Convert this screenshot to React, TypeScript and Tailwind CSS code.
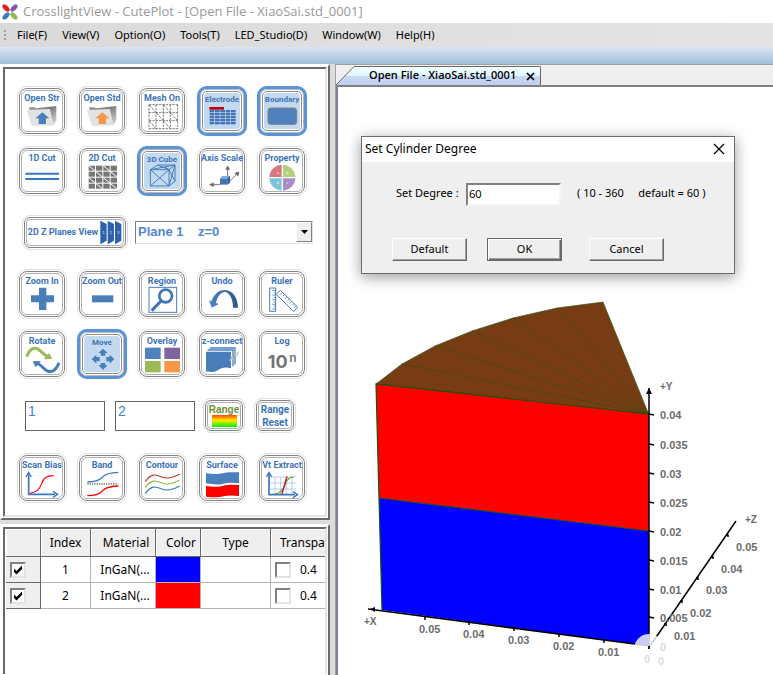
import type { ReactNode } from "react";

const UI = "font-['Noto_Sans','Open_Sans',sans-serif]";
const NARROW = "font-['Roboto',sans-serif]";
const BLUE = "#4a7ebb";

/* ---------- tool buttons ---------- */

function Tile({ label, active, children }: { label: string; active?: boolean; children: ReactNode }) {
  if (active) {
    return (
      <button className="relative h-[50px] w-[50px] rounded-[10px] border-[3px] border-[#5b93d6] bg-white shadow-[0_0_1px_0_#a9c8ec]">
        <span className="absolute inset-0 rounded-[7px] border border-[#b9b9b9]" />
        <span className="absolute inset-[2px] rounded-[5px] border border-[#8c8c8c] bg-white p-px">
          <span className="block h-full rounded-[3px] bg-[#c3d9f0]" />
        </span>
        <span className={`${NARROW} absolute inset-x-0 top-[6px] flex justify-center text-[8px] leading-[10px] font-bold text-[#3f74b5] whitespace-nowrap`}>
          {label}
        </span>
        <Icon className="absolute top-[15px] left-[5px] h-7 w-9 overflow-visible">{children}</Icon>
      </button>
    );
  }
  return (
    <button className="relative h-[50px] w-[50px] rounded-[10px] border border-[#dedede] bg-white p-px">
      <span className="block h-full rounded-[8px] border border-[#858585] p-px">
        <span className="block h-full rounded-[6px] border border-[#b0b0b0]" />
      </span>
      <span className={`${NARROW} absolute inset-x-0 top-[5px] flex justify-center text-[9px] leading-[12px] font-bold text-[#3c73b8] whitespace-nowrap`}>
        {label}
      </span>
      <Icon className="absolute top-[17px] left-[7px] h-7 w-9 overflow-visible">{children}</Icon>
    </button>
  );
}

function Icon({ className, children }: { className: string; children: ReactNode }) {
  return (
    <svg viewBox="0 0 108 84" className={className} fill="none" aria-hidden="true">
      {children}
    </svg>
  );
}

function Frame({ className, children }: { className: string; children: ReactNode }) {
  return (
    <button className={`${className} rounded-[8px] border border-[#dedede] bg-white p-px`}>
      <span className="block h-full rounded-[6px] border border-[#858585] p-px">
        <span className="flex h-full items-center justify-center rounded-[4px] border border-[#b0b0b0]">{children}</span>
      </span>
    </button>
  );
}

/* ---------- icon drawings, on a 108 x 84 grid ---------- */

function Folder({ arrow, id }: { arrow: string; id: string }) {
  return (
    <>
      <defs>
        <linearGradient id={id} x1="0" y1="0" x2="1" y2="1">
          <stop offset="0" stopColor="#9a9a9a" />
          <stop offset="0.45" stopColor="#7d7d7d" />
          <stop offset="1" stopColor="#e0e0e0" />
        </linearGradient>
      </defs>
      <path d="M12 10 H28 L33 13 L94 6 V50 L84 64 H22Z" fill={`url(#${id})`} />
      <path d="M5 18 L75 15 L85 64 H20Z" fill="#e2e2e2" />
      <path d="M52 25 L73 43 H63 V60 H41 V43 H31Z" fill={arrow} />
    </>
  );
}

function MeshIcon() {
  return (
    <g stroke="#666" strokeWidth="2.5">
      <g strokeDasharray="7 3">
        {[12, 33, 55, 76, 98].map((x) => <path key={x} d={`M${x} 2V74`} />)}
        {[2, 26, 50, 74].map((y) => <path key={y} d={`M12 ${y}H98`} />)}
      </g>
      <path d="M12 2L33 26M33 26L55 50M55 2L76 26M12 50L33 74M55 50L76 74M76 26L98 50" strokeDasharray="9 3" />
    </g>
  );
}

function ElectrodeIcon() {
  const rows = [18, 27, 36, 45, 54];
  const cols = [14, 30, 46, 62, 78];
  return (
    <>
      {rows.map((y) => cols.map((x) => <rect key={`${x}-${y}`} x={x} y={y} width="14" height="7" fill="#3f74b8" />))}
      <rect x="13" y="9" width="44" height="8" fill="#c00000" />
    </>
  );
}

function CutGridIcon() {
  const cols = [11, 33, 55, 77];
  const rows = [5, 23, 41, 59];
  return (
    <>
      {rows.map((y) => cols.map((x) => <rect key={`${x}-${y}`} x={x} y={y} width="19" height="15" fill="#777" />))}
      <path d="M11 5L95 74M55 5L95 38M11 41L52 74" stroke="#fff" strokeWidth="3" />
    </>
  );
}

function CubeIcon() {
  return (
    <path d="M16 17H72V66H16ZM16 17L38 3H90L72 17M90 3V52L72 66M16 17L72 66M72 17L16 66M38 3L72 17M16 17L90 3M72 17L90 52M90 3L72 66M60 10L72 17" stroke={BLUE} strokeWidth="3" />
  );
}

function AxisIcon() {
  return (
    <>
      <path d="M68 42V8M45 62H18M70 55L100 26" stroke="#777" strokeWidth="3" />
      <path d="M62 17L68 6L74 17M26 56L14 62L26 68M89 28L102 24L99 37" fill="#666" stroke="#666" strokeWidth="2" />
      <path d="M45 43H67V62H45Z" fill="#3f74b8" />
      <path d="M45 43L52 36H75L67 43Z" fill="#7ea6d6" />
      <path d="M67 43L75 36V56L67 62Z" fill="#2c5a96" />
    </>
  );
}

function PropertyIcon() {
  return (
    <>
      <path d="M52 41V2A39 39 0 0 0 13 41Z" fill="#d3797f" />
      <path d="M52 41V2A39 39 0 0 1 91 41Z" fill="#b4d07e" />
      <path d="M52 41V80A39 39 0 0 1 13 41Z" fill="#7cc3dc" />
      <path d="M52 41V80A39 39 0 0 0 91 41Z" fill="#a78cc6" />
      <path d="M52 0V82M11 41H93" stroke="#fff" strokeWidth="4" />
      <g fill="#fff" fontSize="12" fontFamily="Liberation Sans">
        <text x="35" y="31">a</text>
        <text x="64" y="31">b</text>
        <text x="35" y="59">d</text>
        <text x="64" y="59">c</text>
      </g>
    </>
  );
}

function UndoIcon() {
  return (
    <>
      <defs>
        <linearGradient id="undo" x1="0" x2="1">
          <stop offset="0" stopColor="#4a85cc" />
          <stop offset="1" stopColor="#2f5483" />
        </linearGradient>
      </defs>
      <path d="M12 40L19 43C28 20 42 9 58 9C80 9 98 28 99 62H84C84 38 76 18 60 14C46 16 36 30 33 48L41 51L20 62Z" fill="url(#undo)" />
    </>
  );
}

function RulerIcon() {
  return (
    <g stroke={BLUE} strokeWidth="3">
      <path d="M14 3H32V73H14Z" />
      <path d="M22 10H32M26 17H32M22 24H32M26 31H32M22 38H32M26 45H32M22 52H32M26 59H32M22 66H32" strokeWidth="2.5" />
      <path d="M34 22L46 10L98 60L86 74Z" />
      <path d="M52 16L45 23M59 22L54 27M66 29L59 36M73 36L68 41M80 43L73 50M87 50L82 55M93 56L86 63" strokeWidth="2.5" />
    </g>
  );
}

function RotateIcon() {
  return (
    <>
      <path d="M5 29C14 6 26 -1 40 7C52 14 56 25 72 30" stroke="#9bbb59" strokeWidth="9" />
      <path d="M82 36L56 37L72 18Z" fill="#9bbb59" />
      <path d="M102 47C94 68 82 78 67 72C54 66 52 54 36 49" stroke={BLUE} strokeWidth="9" />
      <path d="M23 43L48 42L32 61Z" fill={BLUE} />
    </>
  );
}

function MoveIcon() {
  return (
    <path d="M54 5L68 18H61V26H47V18H40ZM54 68L68 55H61V48H47V55H40ZM20 36L34 23V30H44V43H34V50ZM88 36L74 23V30H64V43H74V50Z" fill={BLUE} />
  );
}

function SheetsIcon() {
  return (
    <>
      <path d="M14 3H90V52M8 9H84V58" stroke={BLUE} strokeWidth="4" />
      <path d="M3 14H78V64C60 58 46 64 34 72C22 78 10 72 3 74Z" fill={BLUE} />
      <path d="M74 41L84 31M88 27L101 15M78 28L86 38M88 17L98 26" stroke="#c4c4c4" strokeWidth="4" />
    </>
  );
}

/* ---------- left tool panel ---------- */

const RANGE_INPUT =
  "h-[30px] w-20 border border-[#646464] pb-[10px] pl-[2px] font-['Liberation_Sans',sans-serif] text-[14px] text-[#4a86d0] outline-none";

function ToolPanel() {
  return (
    <section className="border-2 border-t-white border-l-white border-r-[#696969] border-b-[#696969] bg-white p-px">
      <div className="border-2 border-t-[#696969] border-l-[#696969] border-r-[#e3e3e3] border-b-[#e3e3e3] pt-[17px] pb-3 pl-3">
        <div className="grid grid-cols-[repeat(5,50px)] gap-[10px]">
          <Tile label="Open Str"><Folder id="str" arrow={BLUE} /></Tile>
          <Tile label="Open Std"><Folder id="std" arrow="#f79646" /></Tile>
          <Tile label="Mesh On"><MeshIcon /></Tile>
          <Tile label="Electrode" active><ElectrodeIcon /></Tile>
          <Tile label="Boundary" active>
            <rect x="9" y="12" width="86" height="49" rx="8" fill="#4f81bd" stroke="#808080" strokeWidth="3" />
          </Tile>
          <Tile label="1D Cut"><path d="M1 29H102M1 45H102" stroke="#3a76c0" strokeWidth="6" /></Tile>
          <Tile label="2D Cut"><CutGridIcon /></Tile>
          <Tile label="3D Cube" active><CubeIcon /></Tile>
          <Tile label="Axis Scale"><AxisIcon /></Tile>
          <Tile label="Property"><PropertyIcon /></Tile>
        </div>

        <div className="mt-[19px] ml-[5px] flex items-start">
          <Frame className="h-[35px] w-[106px]">
            <span className={`${NARROW} text-[9px] font-bold text-[#3c73b8] whitespace-nowrap`}>2D Z Planes View</span>
            <svg viewBox="0 0 66 75" className="ml-[2px] h-[25px] w-[22px] shrink-0" aria-hidden="true">
              {[0, 22, 44].map((x, i) => (
                <g key={x}>
                  <path d={`M${x + 1} 2L${x + 20} 12V62L${x + 1} 73Z`} fill="#2b62ab" />
                  <text x={x + 7} y="42" fontSize="13" fill="#dce8f7" fontFamily="Liberation Sans">{i + 1}</text>
                </g>
              ))}
            </svg>
          </Frame>
          <div className="relative mt-[6px] ml-[7px] h-[23px] w-[178px]">
            <select
              aria-label="Plane"
              className="block h-full w-full appearance-none border border-t-[#808080] border-l-[#808080] border-r-[#e3e3e3] border-b-[#e3e3e3] bg-white pb-[2px] pl-[2px] font-['Liberation_Sans',sans-serif] text-[13px] font-bold text-[#5088cf] outline-none"
            >
              <option>{"Plane 1\u00a0\u00a0\u00a0\u00a0z=0"}</option>
            </select>
            <span className="pointer-events-none absolute top-px right-px flex h-5 w-4 items-center justify-center border border-t-white border-l-white border-r-[#808080] border-b-[#808080] bg-[#efefef]">
              <svg viewBox="0 0 7 4" className="h-1 w-[7px]" aria-hidden="true"><path d="M0 0H7L3.5 4Z" fill="#000" /></svg>
            </span>
          </div>
        </div>

        <div className="mt-[19px] grid grid-cols-[repeat(5,50px)] gap-[10px]">
          <Tile label="Zoom In"><path d="M42 2H64V25H87V46H64V69H42V46H18V25H42Z" fill={BLUE} /></Tile>
          <Tile label="Zoom Out"><rect x="21" y="25" width="64" height="21" fill={BLUE} /></Tile>
          <Tile label="Region">
            <rect x="12" y="1" width="83" height="75" stroke={BLUE} strokeWidth="3" />
            <circle cx="62" cy="27" r="19" stroke="#3f74b8" strokeWidth="8" />
            <path d="M48 42L20 71" stroke="#3f74b8" strokeWidth="9" />
          </Tile>
          <Tile label="Undo"><UndoIcon /></Tile>
          <Tile label="Ruler"><RulerIcon /></Tile>
          <Tile label="Rotate"><RotateIcon /></Tile>
          <Tile label="Move" active><MoveIcon /></Tile>
          <Tile label="Overlay">
            <rect x="0" y="2" width="47" height="34" fill="#4f81bd" />
            <rect x="58" y="2" width="47" height="34" fill="#8064a2" />
            <rect x="0" y="42" width="47" height="34" fill="#9bbb59" />
            <rect x="58" y="42" width="47" height="34" fill="#f79646" />
          </Tile>
          <Tile label="z-connect"><SheetsIcon /></Tile>
          <Tile label="Log">
            <text x="8" y="62" fontSize="54" fontWeight="700" fill="#757575" fontFamily="Inter">10</text>
            <text x="73" y="44" fontSize="36" fontWeight="600" fill="#757575" fontFamily="Inter">n</text>
          </Tile>
        </div>

        <div className="mt-[19px] ml-2 flex items-center">
          <input aria-label="Range from" defaultValue="1" className={`${RANGE_INPUT} mr-[10px]`} />
          <input aria-label="Range to" defaultValue="2" className={`${RANGE_INPUT} mr-2`} />
          <Frame className="mr-[9px] h-[35px] w-[42px]">
            <span className="flex flex-col items-center">
              <span className="font-['Liberation_Sans',sans-serif] text-[10px] leading-[11px] font-bold text-[#6a8f35]">Range</span>
              <span className="h-3 w-[25px] bg-[linear-gradient(#ff4a00,#ffe600_45%,#00f000)]" />
            </span>
          </Frame>
          <Frame className="h-[35px] w-[42px]">
            <span className={`${NARROW} text-center text-[10px] leading-[13px] font-bold text-[#3c73b8]`}>Range<br />Reset</span>
          </Frame>
        </div>

        <div className="mt-5 grid grid-cols-[repeat(5,50px)] gap-[10px]">
          <Tile label="Scan Bias">
            <path d="M11 72V8M9 70H90" stroke="#3a76c0" strokeWidth="5" />
            <path d="M3 18L11 4L19 18M84 61L98 70L84 79" stroke="#3a76c0" strokeWidth="4" />
            <path d="M15 67C38 62 44 54 50 38C55 20 65 15 86 14" stroke="#f00" strokeWidth="3.5" />
          </Tile>
          <Tile label="Band">
            <path d="M7 33C38 33 48 25 54 17C62 8 80 5 100 4" stroke="#3a76c0" strokeWidth="4" />
            <path d="M7 39H100" stroke="#777" strokeWidth="4" strokeDasharray="4 3" />
            <path d="M7 74C38 74 48 66 54 58C62 49 80 46 100 45" stroke="#f00" strokeWidth="4" />
          </Tile>
          <Tile label="Contour">
            <path d="M1 32C18 6 32 10 50 18C68 26 84 20 104 9" stroke="#c0392b" strokeWidth="3.5" />
            <path d="M1 50C18 24 32 28 50 36C68 44 84 38 104 27" stroke="#8db53f" strokeWidth="3.5" />
            <path d="M1 68C18 42 32 46 50 54C68 62 84 56 104 45" stroke="#3a76c0" strokeWidth="3.5" />
          </Tile>
          <Tile label="Surface">
            <path d="M3 7C28 10 40 10 55 6C72 2 86 4 102 4V37C86 36 72 34 55 38C40 42 28 41 3 37Z" fill="#4a80be" />
            <path d="M3 45C28 48 40 48 55 44C72 40 86 42 102 42V75C86 74 72 72 55 76C40 80 28 79 3 77Z" fill="#f00" />
          </Tile>
          <Tile label="Vt Extract">
            <path d="M30 18V70M47 18V70M64 18V70M81 18V70M12 18H95M12 36H95M12 54H95" stroke="#a9c4e4" strokeWidth="2.5" />
            <path d="M14 71C40 70 52 62 60 42C66 24 72 20 86 18" stroke="#76a02f" strokeWidth="3.5" />
            <path d="M50 72L66 16" stroke="#c0282d" strokeWidth="4.5" />
            <path d="M12 73V8M10 71H90" stroke="#3a76c0" strokeWidth="5" />
            <path d="M4 18L12 4L20 18M84 62L98 71L84 80" stroke="#3a76c0" strokeWidth="4" />
          </Tile>
        </div>
      </div>
    </section>
  );
}

/* ---------- layer table ---------- */

function Check({ label, checked }: { label: string; checked?: boolean }) {
  return (
    <span className="relative block h-4 w-4">
      <input
        type="checkbox"
        aria-label={label}
        defaultChecked={checked}
        className="peer block h-4 w-4 appearance-none border-2 border-t-[#808080] border-l-[#808080] border-r-[#e3e3e3] border-b-[#e3e3e3] bg-white"
      />
      <svg viewBox="0 0 10 10" className="pointer-events-none absolute top-[3px] left-[3px] hidden h-[10px] w-[10px] peer-checked:block" aria-hidden="true">
        <path d="M1 3.5V7L3.5 9.5L9 4V0.5L3.5 6Z" fill="#000" />
      </svg>
    </span>
  );
}

const HEAD = "border-r border-b border-[#696969] p-0 font-normal shadow-[inset_1px_1px_0_#fff]";
const CELL = "border-r border-b border-[#b4b4b4] p-0 text-center";

function LayerTable() {
  const rows = [
    { index: 1, color: "bg-[#0000ff]" },
    { index: 2, color: "bg-[#ff0000]" },
  ];
  return (
    <section className="mt-1 flex-1 border-2 border-t-white border-l-white border-r-[#696969] border-b-0 bg-white p-px">
      <div className="h-full overflow-hidden border-2 border-t-[#696969] border-l-[#696969] border-r-[#e3e3e3] border-b-0 pl-px">
        <table className={`${UI} w-full table-fixed border-separate border-spacing-0 text-[12px] text-black`}>
          <colgroup>
            <col className="w-[35px]" />
            <col className="w-[50px]" />
            <col className="w-[65px]" />
            <col className="w-[45px]" />
            <col className="w-[70px]" />
            <col />
          </colgroup>
          <thead className="bg-[#efefef]">
            <tr className="h-[28px]">
              <th className={HEAD}></th>
              <th className={HEAD}>Index</th>
              <th className={`${HEAD} pl-[6px]`}>Material</th>
              <th className={`${HEAD} pl-[6px]`}>Color</th>
              <th className={HEAD}>Type</th>
              <th className={`${HEAD} border-r-0 pl-[9px] text-left`}>Transpa</th>
            </tr>
          </thead>
          <tbody>
            {rows.map((row) => (
              <tr key={row.index} className="h-[26px]">
                <td className="border-r border-b border-[#696969] bg-[#efefef] p-0 pl-1">
                  <Check label={`Show layer ${row.index}`} checked />
                </td>
                <td className={CELL}>{row.index}</td>
                <td className={`${CELL} pl-1`}>InGaN(...</td>
                <td className={`${CELL} ${row.color}`}></td>
                <td className={CELL}></td>
                <td className={`${CELL} border-r-0`}>
                  <div className="flex items-center gap-[9px] pl-1">
                    <Check label={`Transparent layer ${row.index}`} />
                    <span>0.4</span>
                  </div>
                </td>
              </tr>
            ))}
          </tbody>
        </table>
      </div>
    </section>
  );
}

/* ---------- plot ---------- */

const Y_TICKS = [
  ["0.04", 414], ["0.035", 444], ["0.03", 473], ["0.025", 502],
  ["0.02", 531], ["0.015", 560], ["0.01", 589], ["0.005", 617],
] as const;
const X_TICKS = [
  ["0.05", 425, 617], ["0.04", 469, 622], ["0.03", 514, 628], ["0.02", 559, 634], ["0.01", 604, 640],
] as const;
const Z_TICKS = [
  ["0.05", 728, 534], ["0.04", 713, 556], ["0.03", 698, 577], ["0.02", 682, 600], ["0.01", 666, 623],
] as const;

function Plot() {
  const rim = [[402, 364], [435, 346], [472, 331], [513, 318], [557, 308]];
  return (
    <svg viewBox="338 87 435 588" className="block h-[588px] w-[435px]" role="img" aria-label="Cylinder section">
      <path d="M376 384L402 364L435 346L472 331L513 318L557 308L603 302L649 415Z" fill="#783c14" stroke="#2d5a1b" strokeWidth="0.7" />
      {rim.map(([x, y]) => (
        <path key={x} d={`M${x} ${y}L649 414`} stroke="#1f5210" strokeWidth="1" strokeDasharray="1.5 2" />
      ))}
      <path d="M376 384L649 414V531L379 498Z" fill="#f00" />
      <path d="M379 498L649 531V646L382 610Z" fill="#00f" />
      <path d="M382 610L379 498L376 384L649 414M379 498L649 531" fill="none" stroke="#17500f" strokeWidth="1.2" />
      <g stroke="#000" strokeWidth="1.5" fill="none">
        <path d="M368 609L650 646M649 388V646M650 646L736 521" />
        {Y_TICKS.map(([t, y]) => <path key={t} d={`M649 ${y}L654 ${y + 1}`} />)}
        {X_TICKS.map(([t, x, y]) => <path key={t} d={`M${x} ${y - 1}V${y + 3}`} />)}
        {Z_TICKS.map(([t, x, y]) => <path key={t} d={`M${x - 2} ${y + 1}H${x}V${y + 3}`} />)}
      </g>
      <path d="M649 388L652 394H646ZM370 609L375 607V612Z" fill="#000" />
      <circle cx="649" cy="649" r="15" fill="#fff" fillOpacity="0.8" />
      <path d="M649 646V649" stroke="#222" strokeWidth="2" />
      <g fontFamily="Liberation Sans" fontSize="11" fontWeight="bold" fill="#6c6c6c">
        {Y_TICKS.map(([t, y]) => <text key={t} x="660" y={y + 5}>{t}</text>)}
        {X_TICKS.map(([t, x, y]) => <text key={t} x={x - 6} y={y + 16}>{t}</text>)}
        {Z_TICKS.map(([t, x, y]) => <text key={t} x={x + 8} y={y + 17}>{t}</text>)}
        <g fontSize="10">
          <text x="660" y="390">+Y</text>
          <text x="364" y="625">+X</text>
          <text x="745" y="523">+Z</text>
        </g>
        <g fill="#dcdcdc">
          <text x="660" y="651">0</text>
          <text x="644" y="663">0</text>
          <text x="658" y="665">0</text>
        </g>
      </g>
    </svg>
  );
}

/* ---------- dialog ---------- */

function DegreeDialog() {
  const btn = "h-[23px] w-[75px] border border-t-white border-l-white border-r-[#696969] border-b-[#696969] bg-[#efefef] shadow-[inset_-1px_-1px_0_#a0a0a0]";
  return (
    <div role="dialog" aria-label="Set Cylinder Degree" className="absolute top-[71px] left-[25px] w-[374px] border border-[#6b6b6b] bg-[#efefef] text-[11px] text-black shadow-[0_3px_14px_rgba(0,0,0,0.4)]">
      <div className="flex h-[25px] items-center justify-between bg-white pr-[9px] pb-px pl-[3px] text-[12px]">
        <span>Set Cylinder Degree</span>
        <button aria-label="Close">
          <svg viewBox="0 0 12 12" className="h-3 w-3" aria-hidden="true"><path d="M1 1L11 11M11 1L1 11" stroke="#000" strokeWidth="1.2" /></svg>
        </button>
      </div>
      <div className="flex items-center pt-[21px] pl-[34px]">
        <label htmlFor="degree" className="w-[70px] pb-[2px] whitespace-nowrap">Set Degree :</label>
        <input
          id="degree"
          defaultValue="60"
          className="h-[23px] w-[95px] border-2 border-t-[#808080] border-l-[#808080] border-r-[#f4f4f4] border-b-[#f4f4f4] bg-white px-px pb-[3px] outline-none"
        />
        <span className="ml-4 pb-[2px] whitespace-pre">{"( 10 - 360     default = 60 )"}</span>
      </div>
      <div className="flex pt-8 pb-3 pl-[30px]">
        <button className={btn}>Default</button>
        <button className="ml-5 h-[23px] w-[75px] border border-[#696969] bg-[#efefef] shadow-[inset_1px_1px_0_#fff,inset_-1px_-1px_0_#696969,inset_-2px_-2px_0_#a0a0a0]">OK</button>
        <button className={`${btn} ml-[27px]`}>Cancel</button>
      </div>
    </div>
  );
}

/* ---------- document area ---------- */

function DocumentArea() {
  return (
    <section className="relative ml-[5px] flex min-w-0 flex-1 flex-col border-t border-l border-[#a0a0a0] bg-[#efefef]">
      <div className="flex h-5 items-end">
        <svg viewBox="0 0 19 19" className="h-[19px] w-[19px]" aria-hidden="true">
          <defs>
            <linearGradient id="tab" x1="0" y1="0" x2="0" y2="1">
              <stop offset="0" stopColor="#f0ffff" />
              <stop offset="0.5" stopColor="#e4f6fd" />
              <stop offset="0.5" stopColor="#c9daf3" />
              <stop offset="1" stopColor="#bfcdef" />
            </linearGradient>
          </defs>
          <path d="M0 19L18 0.5H19V19Z" fill="url(#tab)" />
          <path d="M0 19L18 0.5H19" fill="none" stroke="#696969" />
        </svg>
        <div className="flex h-[19px] items-center rounded-tr-[2px] border-t border-r border-[#696969] bg-[linear-gradient(#f0ffff,#e4f6fd_50%,#c9daf3_50%,#bfcdef)] pr-[5px] pl-[14px] text-black">
          <span className="pb-px font-['Open_Sans',sans-serif] text-[11px] font-semibold whitespace-nowrap">Open File - XiaoSai.std_0001</span>
          <button aria-label="Close tab" className="ml-[10px]">
            <svg viewBox="0 0 9 9" className="h-[9px] w-[9px]" aria-hidden="true"><path d="M1 1L8 8M8 1L1 8" stroke="#000" strokeWidth="1.7" /></svg>
          </button>
        </div>
      </div>
      <div className="flex-1 overflow-hidden border-t-2 border-l-2 border-t-[#808080] border-l-[#7b8494] bg-white">
        <Plot />
      </div>
      <DegreeDialog />
    </section>
  );
}

export default function App() {
  const menus = ["File(F)", "View(V)", "Option(O)", "Tools(T)", "LED_Studio(D)", "Window(W)", "Help(H)"];
  return (
    <div className={`${UI} flex min-h-screen flex-col bg-[#dddddd]`}>
      <header className="flex h-[23px] items-center bg-white pl-[2px]">
        <svg viewBox="0 0 16 16" className="h-4 w-4" aria-hidden="true">
          <ellipse cx="4" cy="4" rx="4.4" ry="2.3" transform="rotate(45 4 4)" fill="#f0141e" />
          <ellipse cx="12" cy="4" rx="4.4" ry="2.3" transform="rotate(-45 12 4)" fill="#7d5ba0" />
          <ellipse cx="4" cy="12" rx="4.4" ry="2.3" transform="rotate(-45 4 12)" fill="#3f78c0" />
          <ellipse cx="12" cy="12" rx="4.4" ry="2.3" transform="rotate(45 12 12)" fill="#94b84e" />
        </svg>
        <h1 className="ml-[5px] font-['Open_Sans',sans-serif] text-[13px] text-[#999999] whitespace-nowrap">CrosslightView - CutePlot - [Open File - XiaoSai.std_0001]</h1>
      </header>
      <nav className="flex h-6 items-center bg-[linear-gradient(90deg,#dadada,#e4e4e4)] pl-1">
        <span className="mr-[11px] h-[11px] w-[2px] bg-[repeating-linear-gradient(#a0a0a0_0_2px,transparent_2px_4px)]" />
        <div className="flex gap-[15px]">
          {menus.map((m) => (
            <button key={m} className="text-[11px] text-black whitespace-nowrap">{m}</button>
          ))}
        </div>
      </nav>
      <div className="h-[17px] bg-[linear-gradient(#dae6f2,#a3bdd9)]" />
      <main className="flex flex-1">
        <aside className="flex w-[330px] shrink-0 flex-col">
          <ToolPanel />
          <LayerTable />
        </aside>
        <DocumentArea />
      </main>
    </div>
  );
}
